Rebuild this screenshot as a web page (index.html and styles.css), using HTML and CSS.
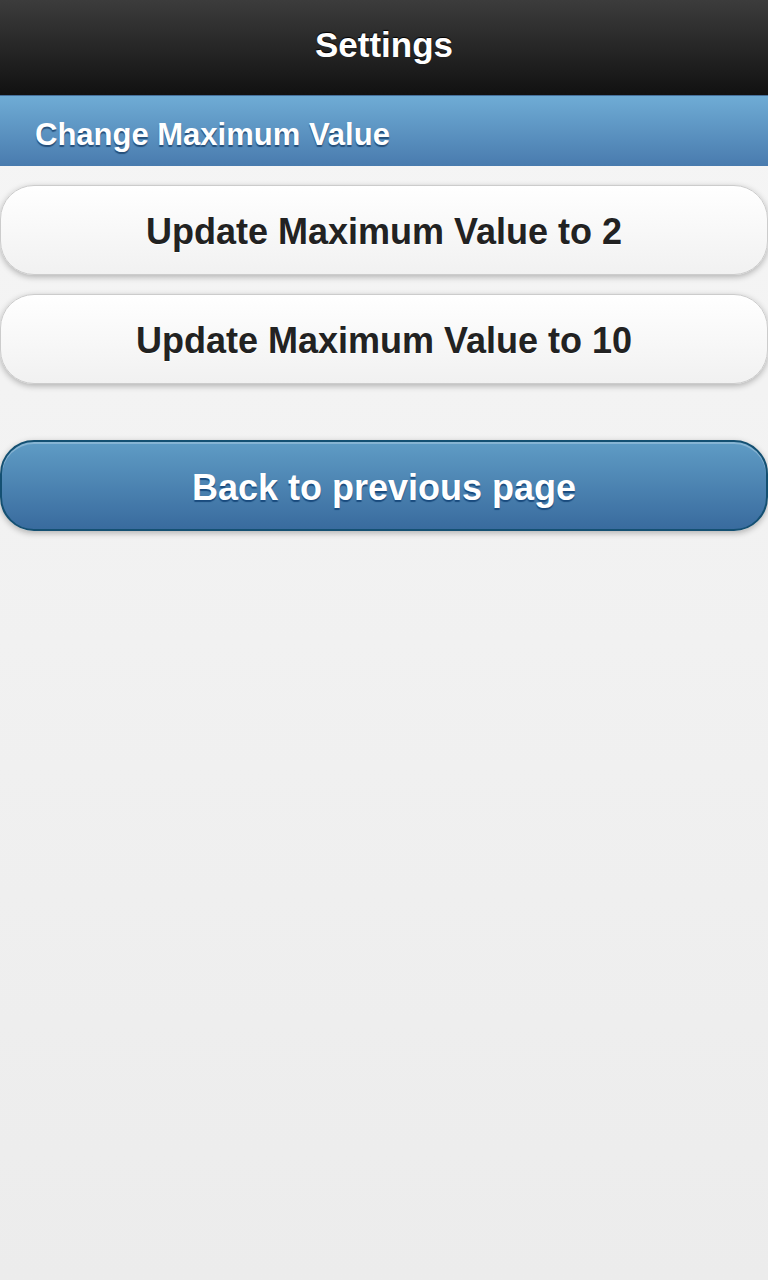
FILE: index.html
```html
<!DOCTYPE html>
<html>
<head>
<meta charset="utf-8">
<link rel="stylesheet" href="styles.css">
</head>
<body>
<div class="page">
  <header class="header"><h1>Settings</h1></header>
  <div class="bar">Change Maximum Value</div>
  <main class="content">
    <div class="group">
      <a class="btn">Update Maximum Value to 2</a>
      <a class="btn">Update Maximum Value to 10</a>
    </div>
    <a class="btn btn-blue">Back to previous page</a>
  </main>
</div>
</body>
</html>
```
FILE: styles.css
```css
html, body {
  margin: 0;
  padding: 0;
  height: 100%;
}
body {
  font-family: "Liberation Sans", Arial, sans-serif;
  background: linear-gradient(#f6f6f6, #ececec);
  min-height: 1280px;
}
.page {
  display: flex;
  flex-direction: column;
}
.header {
  height: 95px;
  background: linear-gradient(#3c3c3c, #111111);
  border-bottom: 1px solid #456f9a;
  display: flex;
  align-items: center;
  justify-content: center;
}
.header h1 {
  margin: 0;
  color: #fff;
  font-size: 35px;
  font-weight: bold;
  text-shadow: 0 -1px 1px #000;
  padding-bottom: 6px;
}
.bar {
  height: 70px;
  box-sizing: border-box;
  background: linear-gradient(#6facd5, #497bae);
  color: #fff;
  font-size: 31px;
  font-weight: bold;
  text-shadow: 0 2px 1px #254f7a;
  display: flex;
  align-items: center;
  padding-left: 35px;
  padding-top: 8px;
}
.content {
  display: flex;
  flex-direction: column;
  padding-top: 19px;
}
.group {
  display: flex;
  flex-direction: column;
  gap: 19px;
}
.btn {
  display: flex;
  align-items: center;
  justify-content: center;
  height: 90px;
  box-sizing: border-box;
  border: 1px solid #cccccc;
  border-radius: 34px;
  background: linear-gradient(#ffffff, #f1f1f1);
  box-shadow: 0 2px 6px rgba(0,0,0,0.28);
  color: #222;
  font-size: 36px;
  font-weight: bold;
  text-shadow: 0 1px 0 #fff;
  padding-top: 3px;
}
.btn-blue {
  margin-top: 56px;
  border: 2px solid #145072;
  height: 91px;
  background: linear-gradient(#5f9cc5, #396b9e);
  box-shadow: inset 0 2px 0 rgba(255,255,255,0.25), 0 2px 6px rgba(0,0,0,0.28);
  color: #fff;
  text-shadow: 0 2px 1px #194b7e;
  padding-top: 5px;
}
```
